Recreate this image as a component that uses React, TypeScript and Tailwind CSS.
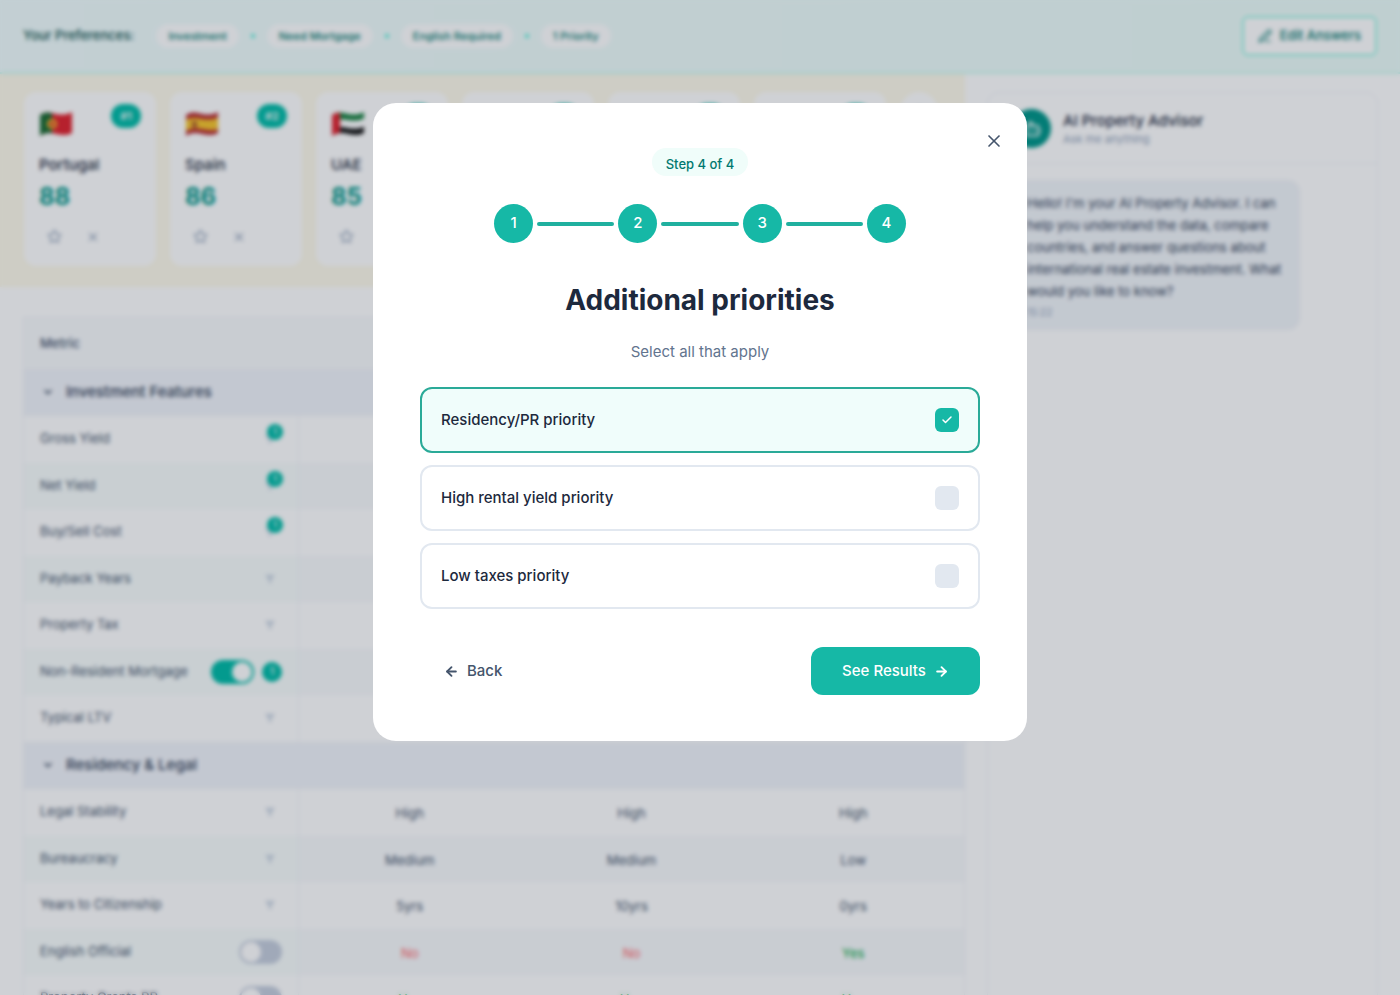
import React, { useState } from 'react';
import { ArrowLeft, ArrowRight, Bot, Check, ChevronDown, Filter, PenLine, Plus, Star, X } from 'lucide-react';

interface Country {
  rank: number;
  name?: string;
  score?: number;
  flag?: 'pt' | 'es' | 'ae';
}

interface MetricRow {
  label: string;
  control: 'filter' | 'filtered' | 'on' | 'off';
  values?: string[];
}

interface MetricGroup {
  title: string;
  rows: MetricRow[];
}

const preferences = ['Investment', 'Need Mortgage', 'English Required', '1 Priority'];

const countries: Country[] = [
  { rank: 1, name: 'Portugal', score: 88, flag: 'pt' },
  { rank: 2, name: 'Spain', score: 86, flag: 'es' },
  { rank: 3, name: 'UAE', score: 85, flag: 'ae' },
  { rank: 4 },
  { rank: 5 },
  { rank: 6 },
];

const groups: MetricGroup[] = [
  {
    title: 'Investment Features',
    rows: [
      { label: 'Gross Yield', control: 'filtered' },
      { label: 'Net Yield', control: 'filtered' },
      { label: 'Buy/Sell Cost', control: 'filtered' },
      { label: 'Payback Years', control: 'filter' },
      { label: 'Property Tax', control: 'filter' },
      { label: 'Non-Resident Mortgage', control: 'on' },
      { label: 'Typical LTV', control: 'filter' },
    ],
  },
  {
    title: 'Residency & Legal',
    rows: [
      { label: 'Legal Stability', control: 'filter', values: ['High', 'High', 'High'] },
      { label: 'Bureaucracy', control: 'filter', values: ['Medium', 'Medium', 'Low'] },
      { label: 'Years to Citizenship', control: 'filter', values: ['5yrs', '10yrs', '0yrs'] },
      { label: 'English Official', control: 'off', values: ['No', 'No', 'Yes'] },
      { label: 'Property Grants PR', control: 'off', values: ['Yes', 'Yes', 'Yes'] },
    ],
  },
];

const priorities = ['Residency/PR priority', 'High rental yield priority', 'Low taxes priority'];

const Flag: React.FC<{ code: 'pt' | 'es' | 'ae' }> = ({ code }) => {
  const wave = 'M1 3 C8 -1 12 1 17 2 S28 3 33 0 V21 C28 24 22 23 17 22 S7 20 1 24 Z';
  return (
    <svg viewBox="0 0 34 25" className="h-[25px] w-[34px]" aria-hidden="true">
      <clipPath id={`flag-${code}`}>
        <path d={wave} />
      </clipPath>
      <g clipPath={`url(#flag-${code})`}>
        {code === 'pt' && (
          <>
            <rect width="34" height="25" fill="#e0232e" />
            <rect width="13" height="25" fill="#1b6b33" />
            <circle cx="13" cy="12" r="5" fill="#f2c22d" />
            <circle cx="13" cy="12" r="2.5" fill="#d8342f" />
          </>
        )}
        {code === 'es' && (
          <>
            <rect width="34" height="25" fill="#b92b30" />
            <path d="M0 8 C8 5 12 6 17 7 S28 8 34 5 V17 C28 19 22 18 17 17 S7 16 0 19 Z" fill="#f6c52c" />
            <rect x="7" y="9" width="5" height="7" fill="#b5652b" />
          </>
        )}
        {code === 'ae' && (
          <>
            <rect width="34" height="25" fill="#fff" />
            <path d="M0 0 H34 V6 C28 9 22 9 17 8 S7 7 0 10 Z" fill="#16803f" />
            <path d="M0 18 C7 14 12 15 17 16 S28 17 34 14 V25 H0 Z" fill="#1a1a1a" />
            <rect width="9" height="25" fill="#e0232e" />
          </>
        )}
      </g>
    </svg>
  );
};

const CountryCard: React.FC<{ country: Country }> = ({ country }) => (
  <article className="flex h-[174px] w-[132px] shrink-0 flex-col rounded-xl bg-white px-[15px] pt-3">
    <div className="flex items-start justify-between">
      <div className="pt-2">{country.flag ? <Flag code={country.flag} /> : null}</div>
      <span className="flex h-6 w-[30px] items-center justify-center rounded-full bg-teal-500 text-[11px] font-semibold text-white">
        #{country.rank}
      </span>
    </div>
    {country.name && (
      <>
        <h3 className="mt-4 text-[15px] leading-6 font-medium text-slate-800">{country.name}</h3>
        <p className="mt-1 text-[24px] leading-8 font-bold text-teal-600">{country.score}</p>
        <div className="mt-4 flex items-center gap-6 pl-2 text-slate-400">
          <button type="button" aria-label={`Save ${country.name}`}>
            <Star className="size-[15px]" />
          </button>
          <button type="button" aria-label={`Remove ${country.name}`}>
            <X className="size-[14px]" />
          </button>
        </div>
      </>
    )}
  </article>
);

const Toggle: React.FC<{ label: string; defaultOn: boolean }> = ({ label, defaultOn }) => (
  <input
    type="checkbox"
    role="switch"
    aria-label={label}
    defaultChecked={defaultOn}
    className="h-6 w-[43px] shrink-0 appearance-none rounded-full bg-[#c5cedd] p-[2px] before:block before:size-5 before:rounded-full before:bg-white checked:bg-teal-500 checked:before:ml-auto"
  />
);

const RowControl: React.FC<{ row: MetricRow }> = ({ row }) => {
  if (row.control === 'on') {
    return (
      <div className="flex items-center gap-2">
        <Toggle label={row.label} defaultOn />
        <span className="flex size-5 items-center justify-center rounded-full bg-teal-500 text-[10px] font-medium text-white">1</span>
      </div>
    );
  }
  if (row.control === 'off') {
    return <Toggle label={row.label} defaultOn={false} />;
  }
  return (
    <button type="button" aria-label={`Filter ${row.label}`} className="relative mr-[7px] text-slate-300">
      <Filter className="size-[10px] fill-current" />
      {row.control === 'filtered' && (
        <span className="absolute -top-[10px] -right-2 flex size-4 items-center justify-center rounded-full bg-teal-500 text-[9px] font-medium text-white">
          1
        </span>
      )}
    </button>
  );
};

const valueColor = (value: string) => {
  if (value === 'Yes') return 'text-green-600';
  if (value === 'No') return 'text-red-400';
  return 'text-slate-600';
};

const ComparisonTable: React.FC = () => (
  <table className="w-full table-fixed border-collapse border border-slate-100 bg-white text-[13px]">
    <thead>
      <tr className="h-[51px] bg-slate-50 text-left">
        <th scope="col" className="w-[275px] px-4 font-medium text-slate-600">Metric</th>
        <th scope="col"></th>
        <th scope="col"></th>
        <th scope="col"></th>
      </tr>
    </thead>
    {groups.map((group) => (
      <tbody key={group.title}>
        <tr className="h-[47px] bg-[#f1f4fa]">
          <th scope="rowgroup" colSpan={4} className="px-4 text-left text-[15px] font-medium text-slate-700">
            <button type="button" className="flex items-center gap-3">
              <ChevronDown className="ml-[2px] size-3" strokeWidth={3} />
              {group.title}
            </button>
          </th>
        </tr>
        {group.rows.map((row, index) => (
          <tr key={row.label} className={index % 2 ? 'h-[46px] bg-slate-50' : 'h-[47px] bg-white'}>
            <th
              scope="row"
              className={`border-r border-slate-100 px-4 text-left font-normal text-slate-600 ${index % 2 ? 'bg-[#f8fdfc]' : ''}`}
            >
              <div className="flex items-center justify-between">
                <span>{row.label}</span>
                <RowControl row={row} />
              </div>
            </th>
            {[0, 1, 2].map((column) => {
              const value = row.values?.[column] ?? '';
              return (
                <td key={column} className={`pt-1 text-center font-normal ${valueColor(value)}`}>
                  {value}
                </td>
              );
            })}
          </tr>
        ))}
      </tbody>
    ))}
  </table>
);

const AdvisorPanel: React.FC = () => (
  <aside className="w-[435px] shrink-0 px-[22px] pt-[18px]">
    <div className="min-h-screen rounded-xl border border-slate-100 bg-white">
      <div className="flex items-center gap-3 border-b border-slate-100 px-6 pt-4 pb-[15px]">
        <div className="flex size-[39px] items-center justify-center rounded-full bg-teal-600 text-white">
          <Bot className="size-5" />
        </div>
        <div>
          <h2 className="text-[15px] leading-5 font-medium text-slate-800">AI Property Advisor</h2>
          <p className="text-[11px] leading-4 text-slate-400">Ask me anything</p>
        </div>
      </div>
      <div className="px-6 py-4">
        <div className="w-[288px] rounded-xl bg-slate-100 px-[15px] pt-3 pb-2">
          <p className="text-[13px] leading-[22px] text-slate-700">
            Hello! I'm your AI Property Advisor. I can
            <br />
            help you understand the data, compare
            <br />
            countries, and answer questions about
            <br />
            international real estate investment. What
            <br />
            would you like to know?
          </p>
          <time className="block text-[10px] leading-5 text-slate-400">15:22</time>
        </div>
      </div>
    </div>
  </aside>
);

const PreferencesModal: React.FC = () => {
  const [selected, setSelected] = useState<string[]>([priorities[0]]);

  const toggle = (priority: string) => {
    setSelected((current) =>
      current.includes(priority) ? current.filter((item) => item !== priority) : [...current, priority]
    );
  };

  return (
    <div className="fixed inset-0 z-50 flex items-start justify-center bg-slate-900/20 pt-[103px] backdrop-blur-[2px]">
      <div
        role="dialog"
        aria-modal="true"
        aria-labelledby="modal-title"
        className="relative mx-4 w-full max-w-[654px] rounded-[23px] bg-white px-[47px] pt-[45px] pb-[46px]"
      >
        <button
          type="button"
          aria-label="Close"
          className="absolute top-[19px] right-[14px] flex size-[38px] items-center justify-center text-slate-600"
        >
          <X className="size-5" strokeWidth={2} />
        </button>

        <div className="flex flex-col items-center">
          <span className="rounded-full bg-teal-50 px-[14px] pt-1 text-[13px] leading-6 font-medium text-teal-700">Step 4 of 4</span>
          <ol className="mt-7 flex w-[412px] items-center">
            {[1, 2, 3, 4].map((step) => (
              <React.Fragment key={step}>
                {step > 1 && <li aria-hidden="true" className="mx-1 h-1 flex-1 rounded-full bg-[#20b09f]"></li>}
                <li className="flex size-[39px] items-center justify-center rounded-full bg-[#16b8a6] text-[15px] font-medium text-white">
                  {step}
                </li>
              </React.Fragment>
            ))}
          </ol>
          <h1 id="modal-title" className="mt-[37px] text-[28px] leading-10 font-bold text-slate-800">
            Additional priorities
          </h1>
          <p className="mt-5 text-[15px] leading-6 text-slate-500">Select all that apply</p>
        </div>

        <div className="mt-[23px] flex flex-col gap-3">
          {priorities.map((priority) => {
            const checked = selected.includes(priority);
            return (
              <label
                key={priority}
                className={`flex h-[66px] cursor-pointer items-center justify-between rounded-xl border-2 px-[19px] text-[15px] font-medium text-slate-800 ${
                  checked ? 'border-[#2aaa98] bg-[#f0fdfb]' : 'border-slate-200 bg-white'
                }`}
              >
                {priority}
                <span className="grid place-items-center">
                  <input
                    type="checkbox"
                    checked={checked}
                    onChange={() => toggle(priority)}
                    className="col-start-1 row-start-1 size-6 appearance-none rounded-md bg-slate-200 checked:bg-[#16b8a6]"
                  />
                  {checked && <Check className="pointer-events-none col-start-1 row-start-1 size-3 text-white" strokeWidth={3} />}
                </span>
              </label>
            );
          })}
        </div>

        <div className="mt-[38px] flex items-center justify-between">
          <button type="button" className="flex h-12 items-center gap-2 px-6 text-[15px] font-medium text-slate-600">
            <ArrowLeft className="size-[15px]" strokeWidth={3} />
            Back
          </button>
          <button
            type="button"
            className="flex h-12 w-[169px] items-center justify-center gap-2 rounded-xl bg-[#16b8a6] text-[15px] font-medium text-white"
          >
            See Results
            <ArrowRight className="size-[15px]" strokeWidth={3} />
          </button>
        </div>
      </div>
    </div>
  );
};

const App: React.FC = () => (
  <div className="h-screen overflow-hidden bg-white font-['Inter','Noto_Sans',sans-serif]">
    <header className="flex h-[74px] items-center justify-between border-b-2 border-teal-100 bg-gradient-to-r from-[#f0fdfd] to-[#ecfdf9] px-[23px]">
      <div className="flex items-center gap-[22px]">
        <span className="text-[13px] font-medium text-teal-900">Your Preferences:</span>
        <ul className="flex items-center gap-3">
          {preferences.map((preference, index) => (
            <React.Fragment key={preference}>
              {index > 0 && <li aria-hidden="true" className="size-1 rounded-full bg-teal-300"></li>}
              <li className="rounded-full bg-white px-3 text-[11px] leading-6 font-medium text-teal-700">{preference}</li>
            </React.Fragment>
          ))}
        </ul>
      </div>
      <button
        type="button"
        className="flex h-10 items-center gap-2 rounded-md border-2 border-teal-200 bg-white px-[14px] text-[13px] font-medium text-teal-700"
      >
        <PenLine className="size-[14px]" />
        Edit Answers
      </button>
    </header>

    <div className="flex items-start">
      <main className="min-w-0 flex-1">
        <section className="flex gap-[14px] overflow-hidden bg-[#fefbeb] px-6 pt-[18px] pb-[21px]">
          {countries.map((country) => (
            <CountryCard key={country.rank} country={country} />
          ))}
          <button
            type="button"
            aria-label="Add country"
            className="flex size-[38px] shrink-0 items-center justify-center rounded-full bg-white text-slate-400"
          >
            <Plus className="size-4" />
          </button>
        </section>
        <section className="pt-[30px] pl-[23px]">
          <ComparisonTable />
        </section>
      </main>
      <AdvisorPanel />
    </div>

    <PreferencesModal />
  </div>
);

export default App;
